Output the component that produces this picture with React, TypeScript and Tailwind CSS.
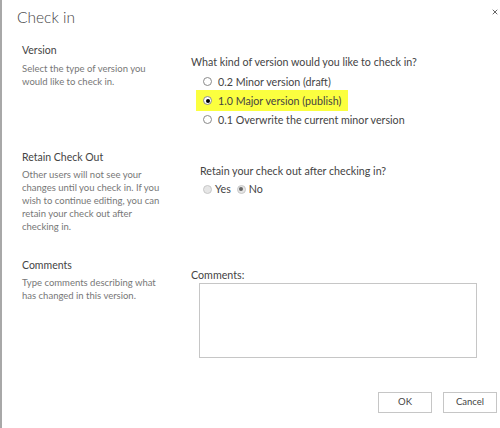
import { X } from 'lucide-react';

function Radio({ checked, disabled }: { checked?: boolean; disabled?: boolean }) {
  return (
    <span
      className={`inline-flex h-[9px] w-[9px] shrink-0 items-center justify-center rounded-full border ${
        disabled ? 'border-[#c8c8c8] bg-[#e6e6e6]' : 'border-[#8a8a8a] bg-white'
      }`}
    >
      {checked && <span className={`h-[4px] w-[4px] rounded-full ${disabled ? 'bg-[#666]' : 'bg-black'}`} />}
    </span>
  );
}

export default function App() {
  const font = { fontFamily: 'Lato, "Open Sans", sans-serif' };

  return (
    <div className="relative h-[428px] w-[500px] overflow-hidden border-l-2 border-[#a8a8a8] bg-white text-[#444]" style={font}>
      {/* Close */}
      <button className="absolute right-[1px] top-[8px] text-[#666]" aria-label="Close">
        <X className="h-[8px] w-[8px]" strokeWidth={3} />
      </button>

      {/* Title */}
      <h1 className="pl-[15px] pt-[6px] text-[15.5px] font-light leading-[22px] text-[#444]">Check in</h1>

      {/* Version */}
      <div className="mt-[14px] flex h-[107px]">
        <div className="w-[189px] shrink-0 whitespace-nowrap pl-[20px]">
          <div className="text-[10.5px] leading-[16px] text-[#444]">Version</div>
          <div className="mt-[4px] text-[9.5px] leading-[13px] text-[#777]">
            Select the type of version you
            <br />
            would like to check in.
          </div>
        </div>
        <div className="whitespace-nowrap pt-[12px]">
          <div className="text-[10.7px] leading-[16px] text-[#444]">What kind of version would you like to check in?</div>
          <div className="mt-[2px] flex flex-col text-[10.7px] leading-[16px]">
            <label className="flex h-[19px] items-center gap-[6px] pl-[12px]">
              <Radio />
              <span>0.2 Minor version (draft)</span>
            </label>
            <label className="-my-[1px] ml-[5px] flex h-[21px] w-[152px] items-center gap-[6px] bg-[#fbff3f] pl-[7px]">
              <Radio checked />
              <span>1.0 Major version (publish)</span>
            </label>
            <label className="flex h-[19px] items-center gap-[6px] pl-[12px]">
              <Radio />
              <span>0.1 Overwrite the current minor version</span>
            </label>
          </div>
        </div>
      </div>

      {/* Retain Check Out */}
      <div className="flex h-[108px]">
        <div className="w-[189px] shrink-0 whitespace-nowrap pl-[20px]">
          <div className="text-[10.5px] leading-[16px] text-[#444]">Retain Check Out</div>
          <div className="mt-[3px] text-[9.5px] leading-[13px] text-[#777]">
            Other users will not see your
            <br />
            changes until you check in. If you
            <br />
            wish to continue editing, you can
            <br />
            retain your check out after
            <br />
            checking in.
          </div>
        </div>
        <div className="whitespace-nowrap pl-[9px] pt-[14px]">
          <div className="text-[10.7px] leading-[16px] text-[#444]">Retain your check out after checking in?</div>
          <div className="mt-[1px] flex h-[18px] items-center pl-[3px] text-[10.7px]">
            <Radio disabled />
            <span className="ml-[3px] mr-[6px]">Yes</span>
            <Radio checked disabled />
            <span className="ml-[3px]">No</span>
          </div>
        </div>
      </div>

      {/* Comments */}
      <div className="flex">
        <div className="w-[189px] shrink-0 whitespace-nowrap pl-[20px]">
          <div className="text-[10.5px] leading-[16px] text-[#444]">Comments</div>
          <div className="mt-[3px] text-[9.5px] leading-[13px] text-[#777]">
            Type comments describing what
            <br />
            has changed in this version.
          </div>
        </div>
        <div className="pt-[10px]">
          <div className="text-[10.7px] leading-[16px] text-[#444]">Comments:</div>
          <textarea className="ml-[8px] block h-[75px] w-[278px] resize-none border border-[#c6c6c6] outline-none" />
        </div>
      </div>

      {/* Buttons */}
      <div className="mt-[34px] flex justify-end gap-[11px] pr-[3px]">
        <button className="h-[21px] w-[54px] border border-[#c6c6c6] bg-white text-[9.5px] text-[#444]">OK</button>
        <button className="h-[21px] w-[54px] border border-[#c6c6c6] bg-white text-[9.5px] text-[#444]">Cancel</button>
      </div>
    </div>
  );
}
